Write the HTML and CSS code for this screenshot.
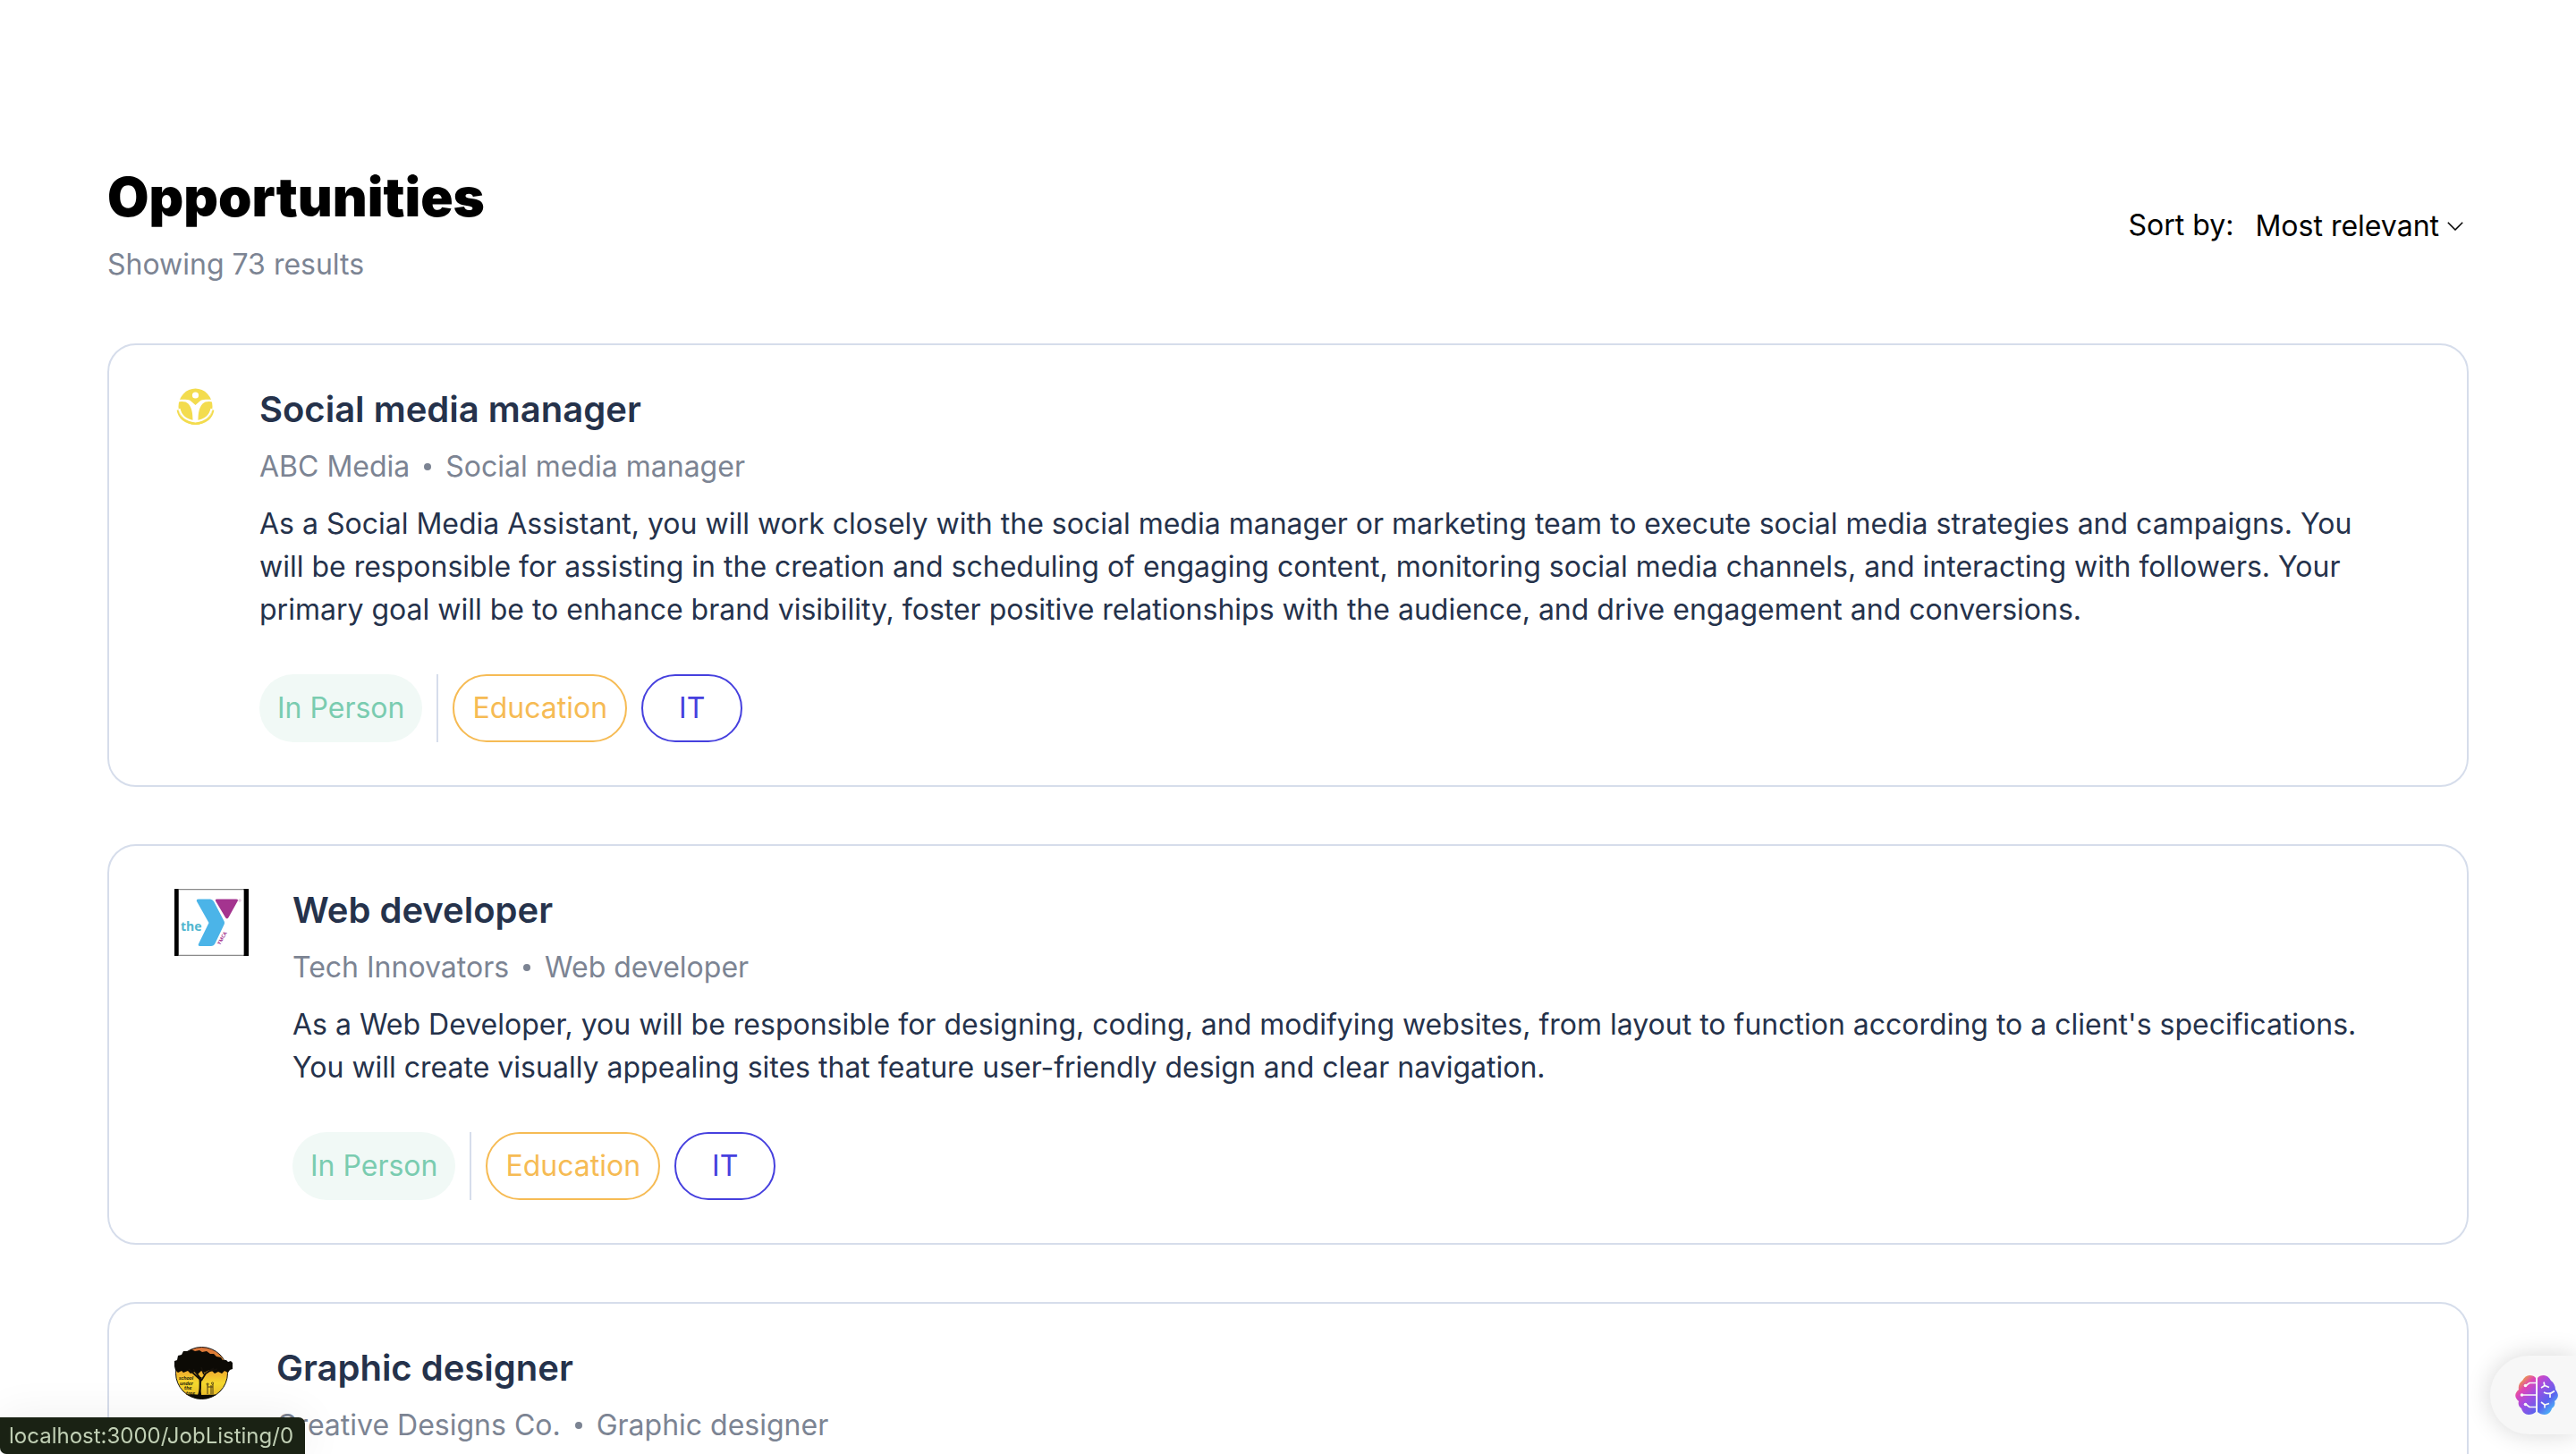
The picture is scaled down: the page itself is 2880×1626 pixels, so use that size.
FILE: index.html
```html
<!DOCTYPE html>
<html lang="en">
<head>
<meta charset="utf-8">
<title>Opportunities</title>
<link rel="stylesheet" href="styles.css">
</head>
<body>
<main class="page">
  <header class="page-header">
    <div class="heading">
      <h1 class="title">Opportunities</h1>
      <p class="results">Showing 73 results</p>
    </div>
    <div class="sort">
      <span class="sort-label">Sort by:</span>
      <span class="sort-value">Most relevant
        <svg class="chevron" viewBox="0 0 18 10"><path d="M.8.8L9 9l8.200-8.200" fill="none" stroke="#000" stroke-width="1.500"/></svg>
      </span>
    </div>
  </header>

  <section class="jobs">
    <article class="card">
      <svg class="logo" width="48" height="42" viewBox="0 0 48 42">
        <ellipse cx="24.500" cy="20.800" rx="19" ry="20.300" fill="#f3dc4e"/>
        <circle cx="24.500" cy="8" r="3.600" fill="#fff"/>
        <path d="M4 13.200c7-.8 11-.6 14.500.6l6 5.200 6-5.200c3.500-1.200 7.500-1.400 14.500-.6v2.300c-6-1-10-.6-12.500 2-3.500 4-5 9-5 19.500h-6c0-10.500-1.500-15.500-5-19.500-2.500-2.600-6.500-3-12.500-2z" fill="#fff"/>
        <path d="M6.500 23c1.500 8 7.500 13 18 14.500C35 36 41 31 42.500 23" fill="none" stroke="#fff" stroke-width="2"/>
        <path d="M4.500 24.500c1.500 8.500 8 14.500 20 15.500 12-1 18.500-7 20-15.500" fill="none" stroke="#f3dc4e" stroke-width="1.800"/>
      </svg>
      <div class="job">
        <h2 class="job-title">Social media manager</h2>
        <p class="company"><span>ABC Media</span><i class="dot"></i><span>Social media manager</span></p>
        <p class="description">As a Social Media Assistant, you will work closely with the social media manager or marketing team to execute social media strategies and campaigns. You will be responsible for assisting in the creation and scheduling of engaging content, monitoring social media channels, and interacting with followers. Your primary goal will be to enhance brand visibility, foster positive relationships with the audience, and drive engagement and conversions.</p>
        <div class="tags">
          <span class="tag tag-place">In Person</span><i class="divider"></i><span class="tag tag-education">Education</span><span class="tag tag-it">IT</span>
        </div>
      </div>
    </article>

    <article class="card">
      <svg class="logo" width="85" height="75" viewBox="0 0 85 75">
        <path d="M1 0h83v75H1z" fill="#000"/>
        <path d="M5.500 0h73v75h-73z" fill="#8a8a8a"/>
        <path d="M6 1.200h72.500v72.600H6z" fill="#fff"/>
        <path d="M28 11.500h13q2.500 0 4 2.500l11.500 22q1 2 0 4L46.500 61q-1.500 3-4.500 3H29.500q-2.500 0-1.500-2.500L39.500 38 26 14q-1-2.500 2-2.500z" fill="#4bb4e8"/>
        <path d="M48.500 11.500H70q3 0 1.500 2.500L61.500 32q-1.800 2.500-3.500 0L47.300 14q-1.300-2.500 1.200-2.500z" fill="#a4348f"/>
        <circle cx="74" cy="13" r="1.200" fill="none" stroke="#d3a0c9" stroke-width=".7"/>
        <text class="logo-the" x="8" y="46.500">the</text>
        <text class="logo-ymca" transform="translate(52 63) rotate(-60)">YMCA</text>
      </svg>
      <div class="job">
        <h2 class="job-title">Web developer</h2>
        <p class="company"><span>Tech Innovators</span><i class="dot"></i><span>Web developer</span></p>
        <p class="description">As a Web Developer, you will be responsible for designing, coding, and modifying websites, from layout to function according to a client's specifications. You will create visually appealing sites that feature user-friendly design and clear navigation.</p>
        <div class="tags">
          <span class="tag tag-place">In Person</span><i class="divider"></i><span class="tag tag-education">Education</span><span class="tag tag-it">IT</span>
        </div>
      </div>
    </article>

    <article class="card">
      <svg class="logo" width="67" height="60" viewBox="0 0 67 60">
        <defs>
          <linearGradient id="sunset" x1="0" y1="0" x2="0" y2="1">
            <stop offset="0" stop-color="#d9713a"/><stop offset=".4" stop-color="#eda02f"/><stop offset=".7" stop-color="#f5d92e"/><stop offset="1" stop-color="#e9b52a"/>
          </linearGradient>
          <clipPath id="disc"><circle cx="31.500" cy="29.500" r="29"/></clipPath>
        </defs>
        <circle cx="31.500" cy="29.500" r="29" fill="url(#sunset)" stroke="#111" stroke-width="1"/>
        <path d="M1 16l3-1 1-5 4-1 2-4 6 0 3-2 4 2 5-1 3 2 5-1 4 3 4 0 3 3 5 1 2 3 4 0 2 2 3-1 2 2v7l-3 1-2 3-4-2-3 3-4-2-4 2-4-4-4 1-3 2-4-2-4 4-3-3-5 2-3-3-5 2-2-2-4 2-3-3-1-4z" fill="#0c0a05"/>
        <path d="M29 52c2-9 1-14 0-18l-7-9M31 38l5-8 9-6M29 36L17 25M34 31l-3-8M38 28l11-3" fill="none" stroke="#14100a" stroke-width="1.800"/>
        <path d="M26.500 56l2-7 .3-15h2.700l-1 15 1 7z" fill="#14100a"/>
        <path d="M0 56q14-4 31-2 16-1 36 0v6H0z" fill="#0c0a05" clip-path="url(#disc)"/>
        <path d="M38 53V43M42 53V43M44 53V42M38 45h6M38 41a1 1 0 1 0 .1 0M43.500 40a1 1 0 1 0 .1 0" fill="none" stroke="#4a3a14" stroke-width="1"/>
        <g class="logo-tree">
          <text x="6" y="37">school</text><text x="7" y="43">under</text><text x="12" y="48">the</text><text x="14" y="53.500">tree</text>
        </g>
      </svg>
      <div class="job">
        <h2 class="job-title">Graphic designer</h2>
        <p class="company"><span>Creative Designs Co.</span><i class="dot"></i><span>Graphic designer</span></p>
      </div>
    </article>
  </section>
</main>

<div class="status">localhost:3000/JobListing/0</div>
<div class="assistant">
  <svg width="48" height="44" viewBox="0 0 48 44">
    <defs>
      <linearGradient id="brain" gradientUnits="userSpaceOnUse" x1="6" y1="4" x2="42" y2="40">
        <stop offset="0" stop-color="#eda43c"/><stop offset=".2" stop-color="#e045b4"/><stop offset=".42" stop-color="#a64de0"/><stop offset=".75" stop-color="#5b62ee"/><stop offset="1" stop-color="#49b8f8"/>
      </linearGradient>
    </defs>
    <path d="M23 3v38c-2 2-5 3-8 3-4 0-7-3-8-7-3-2-4-5-3-8-5-4-5-9 0-13-1-4 1-8 4-10 2-4 5-6 8-6 3 0 6 1 7 3z" fill="url(#brain)"/>
    <path d="M25 3v38c2 2 5 3 8 3 4 0 7-3 8-7 3-2 4-5 3-8 5-4 5-8 1-13 0-4-2-8-5-10-2-4-5-6-8-6-3 0-6 1-7 3z" fill="url(#brain)"/>
    <path d="M23 8.500h-7l-4 3M23 22H8M23 35.500h-7l-4-3M29 14l4-2.500 5 2M33 12l-1-4.500M39 21v4M29 30l4 3 5-1.500M33 33v3.500" fill="none" stroke="#f7f7f7" stroke-width="1.700"/>
    <path d="M32 19q6 3.500 12-1.500" fill="none" stroke="#f7f7f7" stroke-width="1.700"/>
    <g fill="#f7f7f7"><circle cx="11.500" cy="11.500" r="1.800"/><circle cx="7.500" cy="22" r="1.800"/><circle cx="11.500" cy="32.500" r="1.800"/></g>
  </svg>
</div>
</body>
</html>
```

FILE: styles.css
```css
* { box-sizing: border-box; }
html, body { margin: 0; height: 100%; overflow: hidden; }
body { background: #fff; color: #000; font: 400 32px/48px Inter, sans-serif; }
h1, h2, p { margin: 0; }
.page { height: 100%; overflow: hidden; padding: 190px 120px 0; }
.page-header { display: flex; justify-content: space-between; align-items: flex-start; margin-bottom: 64px; }
.title { font-size: 60px; font-weight: 900; line-height: 60px; }
.results { margin-top: 22px; color: #7c8493; }
.sort { display: flex; align-items: flex-start; gap: 24px; padding: 38px 6px 0 0; }
.sort-value { display: flex; align-items: center; gap: 9px; margin-top: 1px; }
.chevron { width: 18px; height: 10px; }
.jobs { display: flex; flex-direction: column; gap: 64px; }
.card { display: flex; align-items: flex-start; gap: 48px; padding: 48px 72px; border: 2px solid #d6ddeb; border-radius: 32px; }
.card:last-child { min-height: 200px; }
.logo { flex: none; }
.job { flex: 1; color: #25324b; }
.job-title { font-size: 40px; font-weight: 600; line-height: 48px; }
.company { display: flex; align-items: center; gap: 16px; margin-top: 16px; color: #7c8493; }
.dot { width: 8px; height: 8px; border-radius: 50%; background: #7c8493; }
.description { margin-top: 16px; }
.tags { display: flex; gap: 16px; margin-top: 48px; }
.tag { padding: 12px 20px; border: 2px solid; border-radius: 38px; }
.tag-place { padding: 14px 20px; border: 0; color: #7accb0; background: #f1f9f6; }
.tag-education { color: #f6bb54; }
.tag-it { padding: 12px 40px; color: #4640de; }
.divider { width: 2px; background: #d6ddeb; }
.logo-the { font: 700 14px "Open Sans", sans-serif; fill: #4fb6cf; }
.logo-ymca { font: 700 5.5px "Open Sans", sans-serif; fill: #a4348f; }
.logo-tree { font: italic 700 6px Lato, sans-serif; fill: #1a1508; }
.status {
  position: fixed; left: 0; bottom: 0; width: 341px; height: 41px; padding-left: 10px;
  background: #1a2214; color: #c0cfb4; font-size: 24px; line-height: 41px; white-space: nowrap;
  border-radius: 0 7px 0 7px; box-shadow: 0 0 50px rgba(0, 0, 0, .07);
}
.assistant {
  position: fixed; right: 0; bottom: 22px; width: 96px; height: 88px; padding: 22px 0 0 28px;
  background: #f7f7f7; border-radius: 44px 0 0 44px; box-shadow: 0 0 28px rgba(0, 0, 0, .16);
}
.assistant svg { display: block; }
```
